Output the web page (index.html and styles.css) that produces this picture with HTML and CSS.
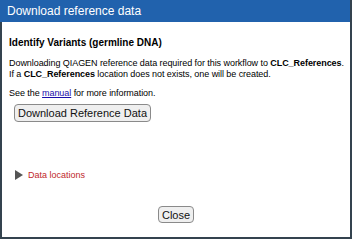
FILE: index.html
```html
<!DOCTYPE html>
<html>
  <head>
    <link rel="stylesheet" href="styles.css">
  </head>
  <body>
    <div class="dialog">
      <div class="titlebar">Download reference data</div>
      <div class="content">
        <div class="workflow-name">Identify Variants (germline DNA)</div>
        <p class="info">
          Downloading QIAGEN reference data required for this workflow to <b>CLC_References</b>.<br>
          If a <b>CLC_References</b> location does not exists, one will be created.
        </p>
        <p class="info see-manual">See the <a href="#">manual</a> for more information.</p>
        <button class="btn download-btn">Download Reference Data</button>
        <div class="locations">
          <span class="arrow"></span>
          <span class="locations-label">Data locations</span>
        </div>
      </div>
      <div class="footer">
        <button class="btn close-btn">Close</button>
      </div>
    </div>
  </body>
</html>
```

FILE: styles.css
```css
html,
body {
  margin: 0;
  padding: 0;
}

.dialog {
  width: 352px;
  height: 239px;
  box-sizing: border-box;
  border: 2px solid #34434f;
  border-top: none;
  display: flex;
  flex-direction: column;
  font-family: "Liberation Sans", Arial, sans-serif;
  background: #fff;
}

.titlebar {
  height: 22px;
  margin: 0 -2px;
  padding-left: 7px;
  background: #2162ad;
  color: #fff;
  font-size: 12px;
  line-height: 22px;
  border-right: 2px solid #34434f;
}

.content {
  flex: 1;
  padding: 15px 0 0 7px;
}

.workflow-name {
  font-size: 10px;
  font-weight: bold;
  margin-bottom: 10px;
}

.info {
  margin: 0 0 8px 0;
  font-size: 9px;
  line-height: 11px;
  white-space: nowrap;
  letter-spacing: -0.06px;
}

.info.see-manual {
  margin-bottom: 4px;
}

.info a {
  color: #1a0dab;
}

.btn {
  font-family: "Liberation Sans", Arial, sans-serif;
  background: #efefef;
  border: 1px solid #8a8a8a;
  border-radius: 4px;
  color: #111;
  padding: 0 3px;
}

.download-btn {
  font-size: 11px;
  margin-left: 5px;
  height: 18px;
}

.locations {
  margin-top: 48px;
  margin-left: 6px;
  display: flex;
  align-items: center;
  gap: 5px;
}

.arrow {
  width: 0;
  height: 0;
  border-top: 5px solid transparent;
  border-bottom: 5px solid transparent;
  border-left: 8px solid #555;
}

.locations-label {
  color: #c0282b;
  font-size: 9px;
}

.footer {
  display: flex;
  justify-content: center;
  padding-bottom: 14px;
}

.close-btn {
  font-size: 11px;
  height: 17px;
  padding: 0 3px;
}
```
